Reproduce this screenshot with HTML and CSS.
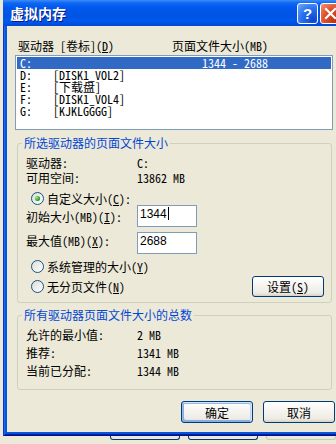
FILE: index.html
```html
<!DOCTYPE html>
<html lang="zh-CN">
<head>
    <meta charset="UTF-8">
    <meta name="viewport" content="width=device-width, initial-scale=1.0">
    <title>虚拟内存</title>
    <link rel="stylesheet" href="styles.css">
</head>
<body>
    <div class="desk">
        <div class="dialog">
            <div class="titlebar">
                <span class="title">虚拟内存</span>
                <span class="tbtn help">?</span>
                <span class="tbtn close">
                    <svg width="13" height="13" viewBox="0 0 13 13"><path d="M2 2 L11 11 M11 2 L2 11" stroke="#fff" stroke-width="2.2" stroke-linecap="square"/></svg>
                </span>
            </div>

            <div class="client">
                <div class="list-head">
                    <span class="col-drive">驱动器 [卷标](<u>D</u>)</span>
                    <span>页面文件大小(MB)</span>
                </div>
                <div class="drives">
                    <div class="drive selected"><span class="letter">C:</span><span class="vol"></span><span>1344 - 2688</span></div>
                    <div class="drive"><span class="letter">D:</span><span class="vol">[DISK1_VOL2]</span></div>
                    <div class="drive"><span class="letter">E:</span><span class="vol">[下载盘]</span></div>
                    <div class="drive"><span class="letter">F:</span><span class="vol">[DISK1_VOL4]</span></div>
                    <div class="drive"><span class="letter">G:</span><span class="vol">[KJKLGGGG]</span></div>
                </div>

                <fieldset class="group">
                    <legend>所选驱动器的页面文件大小</legend>
                    <div class="info"><span class="key">驱动器:</span><span>C:</span></div>
                    <div class="info"><span class="key">可用空间:</span><span>13862 MB</span></div>
                    <div class="radio-row first"><span class="radio checked"></span>自定义大小(<u>C</u>):</div>
                    <div class="field"><span class="key">初始大小(MB)(<u>I</u>):</span><span class="textbox">1344<span class="caret"></span></span></div>
                    <div class="field second"><span class="key raised">最大值(MB)(<u>X</u>):</span><span class="textbox">2688</span></div>
                    <div class="radio-row"><span class="radio"></span>系统管理的大小(<u>Y</u>)</div>
                    <div class="radio-row last"><span class="radio"></span>无分页文件(<u>N</u>)<button class="btn set">设置(<u>S</u>)</button></div>
                </fieldset>

                <fieldset class="group totals">
                    <legend>所有驱动器页面文件大小的总数</legend>
                    <div class="total"><span class="key">允许的最小值:</span><span>2 MB</span></div>
                    <div class="total"><span class="key">推荐:</span><span>1341 MB</span></div>
                    <div class="total"><span class="key">当前已分配:</span><span>1344 MB</span></div>
                </fieldset>

                <div class="actions">
                    <button class="btn default">确定</button>
                    <button class="btn">取消</button>
                </div>
            </div>
        </div>

        <!-- bottoms of the buttons of the window underneath -->
        <div class="behind">
            <span class="peek"></span>
            <span class="peek"></span>
            <span class="peek off"></span>
        </div>
    </div>
</body>
</html>
```

FILE: styles.css
```css
body {
    margin: 0;
    background: #ECE9D8;
    font-family: "Noto Sans Mono CJK SC", "Noto Sans CJK SC", monospace;
    font-size: 12px;
    color: #000000;
}

.desk {
    width: 336px;
    height: 444px;
    padding-left: 3px;
    box-sizing: border-box;
    overflow: hidden;
}

/* window frame */
.dialog {
    width: 342px;
    padding-bottom: 4px;
    background: #0855DD;
    box-shadow: inset 1px 0 #0831D9, inset -1px -1px #00138C, inset 2px 0 #166AEE, inset -2px -2px #001EA0;
}

.titlebar {
    height: 26px;
    display: flex;
    align-items: center;
    padding: 0 4px 0 7px;
    background: linear-gradient(to bottom, #3A8CFA 0%, #0E66F2 12%, #0058EE 30%, #0054E3 60%, #0058EE 82%, #0049D2 100%);
}

.title {
    flex: 1;
    color: #ffffff;
    font-family: "Noto Sans CJK SC", sans-serif;
    font-size: 14px;
    font-weight: bold;
    text-shadow: 1px 1px #0A1883;
}

.tbtn {
    width: 21px;
    height: 21px;
    box-sizing: border-box;
    border: 1px solid #ffffff;
    border-radius: 3px;
    margin-left: 2px;
    display: flex;
    align-items: center;
    justify-content: center;
}

.help {
    background: radial-gradient(circle at 80% 85%, #0B47CF, #2A73F0 55%, #77A9F7);
    color: #ffffff;
    font: bold 15px "Liberation Sans", sans-serif;
}

.close {
    background: radial-gradient(circle at 80% 85%, #B8330F, #E0502A 55%, #F39576);
}

/* dialog face */
.client {
    height: 406px;
    margin: 0 4px;
    padding: 13px 8px 0;
    box-sizing: border-box;
    background: #ECE9D8;
}

.list-head {
    display: flex;
    padding-left: 3px;
    line-height: 14px;
}

.col-drive {
    width: 154px;
}

.drives {
    height: 75px;
    margin-top: 2px;
    padding: 1px;
    box-sizing: border-box;
    border: 1px solid #7F9DB9;
    background: #ffffff;
}

.drive {
    display: flex;
    height: 12px;
    line-height: 12px;
    padding-left: 3px;
    white-space: nowrap;
}

.drive.selected {
    background: #316AC5;
    color: #ffffff;
}

.letter {
    width: 33px;
}

.vol {
    width: 149px;
}

/* group boxes */
.group {
    margin: 6px 1px 0 2px;
    padding: 5px 7px 5px 8px;
    border: 1px solid #D0D0BF;
    border-radius: 3px;
}

.group legend {
    margin-left: -4px;
    padding: 0 2px;
    line-height: 14px;
    color: #0046D5;
}

.key {
    width: 111px;
    flex: none;
}

.info {
    display: flex;
    line-height: 15px;
}

.radio-row {
    display: flex;
    align-items: center;
    height: 14px;
    margin-top: 5px;
}

.radio-row.first {
    margin-top: 6px;
}

.radio-row.last {
    height: 21px;
    margin-top: 3px;
}

.radio {
    width: 13px;
    height: 13px;
    box-sizing: border-box;
    margin: 0 3px 0 5px;
    border: 1px solid #1C5180;
    border-radius: 50%;
    background: linear-gradient(135deg, #DCDCD7, #ffffff);
    display: flex;
    align-items: center;
    justify-content: center;
}

.radio.checked::after {
    content: "";
    width: 5px;
    height: 5px;
    border-radius: 50%;
    background: radial-gradient(circle at 35% 35%, #A7E89D, #21A121 60%, #168A16);
}

.field {
    display: flex;
    align-items: center;
    height: 22px;
}

.field.second {
    margin-top: 5px;
}

.key.raised {
    margin-bottom: 6px;
}

.textbox {
    width: 60px;
    height: 22px;
    box-sizing: border-box;
    padding: 1px 0 0 2px;
    border: 1px solid #7F9DB9;
    background: #ffffff;
    font-family: "Liberation Sans", sans-serif;
    font-size: 12px;
    line-height: 15px;
}

.caret {
    display: inline-block;
    width: 1px;
    height: 13px;
    margin-left: 1px;
    background: #000000;
    vertical-align: -2px;
}

.total {
    display: flex;
    line-height: 18px;
}

.totals {
    margin-top: 5px;
    padding-top: 4px;
    padding-bottom: 9px;
}

/* push buttons */
.btn {
    width: 72px;
    height: 22px;
    padding: 0;
    border: 1px solid #003C74;
    border-radius: 3px;
    background: linear-gradient(to bottom, #ffffff, #F4F3EE 50%, #ECEBE6 85%, #D6D0C5);
    font-family: inherit;
    font-size: 12px;
    color: #000000;
}

.btn.set {
    height: 21px;
    margin-left: auto;
}

.btn.default {
    box-shadow: inset -1px 1px #CEE7FF, inset 1px 2px #98B8EA, inset -2px 2px #BCD4F6, inset 1px -1px #89ADE4, inset 2px -2px #89ADE4;
}

.actions {
    display: flex;
    justify-content: flex-end;
    gap: 10px;
    margin: 11px -2px 0 0;
}

/* window underneath */
.behind {
    display: flex;
    gap: 8px;
    padding-left: 107px;
}

.peek {
    width: 71px;
    height: 3px;
    border: 1px solid #003C74;
    border-top: none;
    border-radius: 0 0 3px 3px;
}

.peek.off {
    border-color: #C9C7BA;
}
```
